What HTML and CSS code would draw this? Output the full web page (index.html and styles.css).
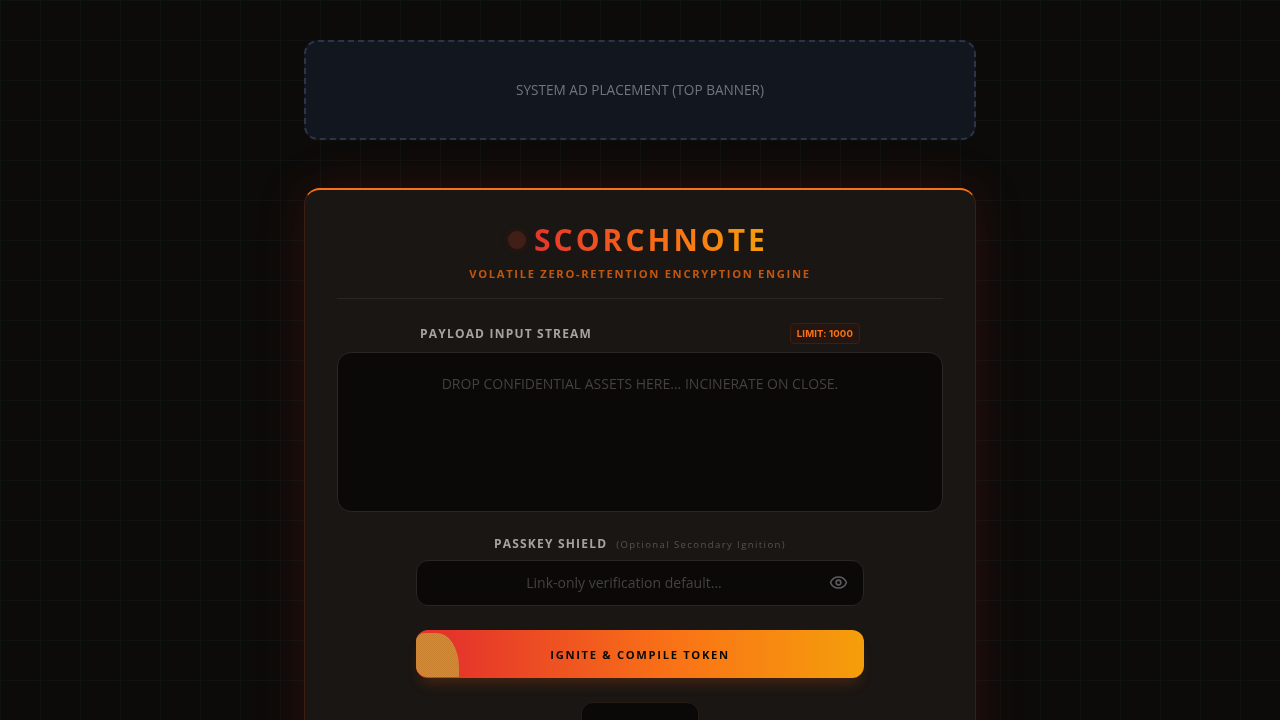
FILE: index.html
```html
<!DOCTYPE html>
<html lang="en">
<head>
<meta charset="utf-8">
<title>ScorchNote</title>
<link rel="stylesheet" href="styles.css">
</head>
<body>
<main class="page">
  <aside class="ad-banner">SYSTEM AD PLACEMENT (TOP BANNER)</aside>
  <section class="card">
    <header class="brand">
      <div class="brand-line">
        <span class="brand-dot"></span>
        <h1 class="brand-title">SCORCHNOTE</h1>
      </div>
      <p class="brand-sub">VOLATILE ZERO-RETENTION ENCRYPTION ENGINE</p>
    </header>
    <div class="payload-head">
      <label class="field-label" for="payload">PAYLOAD INPUT STREAM</label>
      <span class="limit">LIMIT: 1000</span>
    </div>
    <textarea id="payload" class="payload" placeholder="DROP CONFIDENTIAL ASSETS HERE... INCINERATE ON CLOSE."></textarea>
    <div class="narrow">
      <div class="passkey-head">
        <label class="field-label" for="passkey">PASSKEY SHIELD</label>
        <span class="hint">(Optional Secondary Ignition)</span>
      </div>
      <div class="passkey-wrap">
        <input id="passkey" class="passkey" type="text" placeholder="Link-only verification default...">
        <svg class="eye" viewBox="0 0 24 24" fill="none" stroke="currentColor" stroke-width="2" stroke-linecap="round" stroke-linejoin="round" aria-hidden="true">
          <path d="M2.06 12.35a1 1 0 0 1 0-.7 10.75 10.75 0 0 1 19.88 0 1 1 0 0 1 0 .7 10.75 10.75 0 0 1-19.88 0"/>
          <circle cx="12" cy="12" r="3"/>
        </svg>
      </div>
      <button class="ignite" type="button"><span class="ignite-blot"></span><span class="ignite-text">IGNITE &amp; COMPILE TOKEN</span></button>
    </div>
    <div class="secondary"></div>
  </section>
</main>
</body>
</html>
```
FILE: styles.css
```css
* { box-sizing: border-box; }
html, body { margin: 0; height: 100%; }
body {
  height: 720px;
  overflow: hidden;
  background-color: #0c0b09;
  background-image:
    linear-gradient(to right, #0e1311 1px, transparent 1px),
    linear-gradient(to bottom, #0e1311 1px, transparent 1px);
  background-size: 40px 40px;
  font-family: "Open Sans", sans-serif;
}
.page {
  width: 672px;
  margin: 0 auto;
  padding-top: 40px;
  display: flex;
  flex-direction: column;
  gap: 48px;
  will-change: transform;
}
.ad-banner {
  height: 100px;
  border: 2px dashed #2b3547;
  border-radius: 14px;
  background: #12161e;
  color: #71757f;
  font-size: 13.6px;
  line-height: 20px;
  display: flex;
  justify-content: center;
  padding-top: 38px;
}
.card {
  height: 700px;
  padding: 32px;
  background: #1a1613;
  border: 1px solid #3f1e12;
  border-top: 2px solid #f97316;
  border-radius: 16px;
  box-shadow: 0 0 50px rgba(220, 38, 38, 0.15);
  display: flex;
  flex-direction: column;
  align-items: center;
}
.brand {
  width: 100%;
  height: 77px;
  border-bottom: 1px solid #2a2623;
  text-align: center;
  margin-bottom: 24px;
}
.brand-line {
  display: flex;
  justify-content: center;
  align-items: center;
  gap: 8px;
  height: 36px;
  padding-right: 4px;
}
.brand-dot {
  width: 18px;
  height: 18px;
  border-radius: 50%;
  background: #421f16;
  box-shadow: 0 0 8px rgba(220, 60, 20, 0.1);
}
.brand-title {
  margin: 0;
  font-size: 30px;
  line-height: 36px;
  font-weight: 700;
  letter-spacing: 3px;
  background: linear-gradient(90deg, #e5352b, #f97316 60%, #f59e0b);
  -webkit-background-clip: text;
  background-clip: text;
  color: transparent;
}
.brand-sub {
  margin: 8px 0 0;
  font-size: 11.2px;
  line-height: 15px;
  font-weight: 700;
  letter-spacing: 1.68px;
  color: #c2560f;
}
.payload-head {
  width: 440px;
  height: 21px;
  display: flex;
  justify-content: space-between;
  align-items: center;
  margin-bottom: 8px;
}
.field-label {
  font-size: 12px;
  line-height: 16px;
  font-weight: 700;
  letter-spacing: 1.2px;
  color: #a8a29e;
}
.limit {
  font-family: "Inter", sans-serif;
  font-size: 9.6px;
  line-height: 13px;
  font-weight: 700;
  letter-spacing: 0.12px;
  color: #f97316;
  background: #241510;
  border: 1px solid #3f1e12;
  border-radius: 4px;
  padding: 3px 6px;
}
.payload {
  display: block;
  width: 100%;
  height: 160px;
  padding: 21px 16px;
  resize: none;
  background: #0a0908;
  border: 1px solid #2a2623;
  border-radius: 14px;
  font-family: "Open Sans", sans-serif;
  font-size: 14px;
  line-height: 20px;
  color: #a8a29e;
  text-align: center;
  outline: none;
  margin-bottom: 24px;
}
.payload::placeholder { color: #45413e; opacity: 1; }
.narrow { width: 448px; display: flex; flex-direction: column; }
.passkey-head {
  display: flex;
  justify-content: center;
  align-items: baseline;
  gap: 9px;
  height: 16px;
  margin-bottom: 8px;
}
.hint {
  font-size: 9.6px;
  line-height: 16px;
  letter-spacing: 1.38px;
  color: #57534e;
}
.passkey-wrap { position: relative; margin-bottom: 24px; }
.passkey {
  display: block;
  width: 100%;
  height: 46px;
  padding: 0 48px 2px 16px;
  background: #0a0908;
  border: 1px solid #2a2623;
  border-radius: 12px;
  font-family: "Open Sans", sans-serif;
  font-size: 14px;
  color: #a8a29e;
  text-align: center;
  outline: none;
}
.passkey::placeholder { color: #45413e; opacity: 1; }
.eye {
  position: absolute;
  right: 16.5px;
  top: 13px;
  width: 19px;
  height: 19px;
  color: #5c5c60;
}
.ignite {
  position: relative;
  height: 48px;
  border: 0;
  border-radius: 12px;
  background: linear-gradient(90deg, #e5352b 8%, #f97316 58%, #f59e0b 100%);
  box-shadow: 0 10px 14px -5px rgba(234, 88, 12, 0.22);
  font-family: "Open Sans", sans-serif;
  margin-bottom: 24px;
  padding: 0 0 1px;
}
.ignite-text {
  position: relative;
  font-size: 11.2px;
  font-weight: 700;
  letter-spacing: 1.68px;
  color: #0a0908;
}
.ignite-blot {
  position: absolute;
  left: 0;
  top: 3px;
  width: 43px;
  height: 44px;
  background: repeating-conic-gradient(#c8802e 0 25%, #e2872a 0 50%) 0 0 / 2px 2px;
  border-radius: 9px 22px 0 11px / 8px 34px 0 11px;
}
.secondary {
  width: 118px;
  height: 48px;
  background: #0a0908;
  border: 1px solid #2a1a14;
  border-radius: 12px;
  flex: none;
}
```
